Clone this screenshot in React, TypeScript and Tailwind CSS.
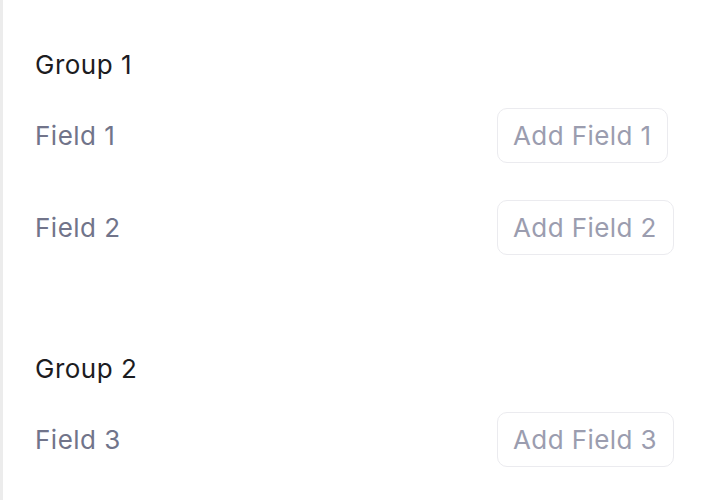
export default function App() {
  const groups = [
    { title: "Group 1", fields: ["Field 1", "Field 2"] },
    { title: "Group 2", fields: ["Field 3"] },
  ];
  return (
    <div
      className="w-[704px] h-[500px] bg-white border-l-[3px] border-[#ececec] overflow-hidden pl-[32px] pt-[49px]"
      style={{ fontFamily: "Inter, 'Noto Sans', sans-serif" }}
    >
      <div className="flex flex-col gap-[98px]">
        {groups.map((g) => (
          <div key={g.title} className="flex flex-col">
            <div className="text-[26px] leading-[32px] tracking-[0.5px] text-[#1c1c1f]">{g.title}</div>
            <div className="mt-[27px] flex flex-col gap-[37px]">
              {g.fields.map((f) => (
                <div key={f} className="flex items-center h-[55px]">
                  <div className="w-[462px] text-[26px] leading-[32px] tracking-[0.5px] text-[#71748a]">{f}</div>
                  <button className="h-[55px] pl-[15px] pr-[16px] rounded-[10px] border border-[#ebebef] bg-white text-[26px] leading-[32px] tracking-[0.4px] text-[#9b9daf]">
                    Add {f}
                  </button>
                </div>
              ))}
            </div>
          </div>
        ))}
      </div>
    </div>
  );
}
